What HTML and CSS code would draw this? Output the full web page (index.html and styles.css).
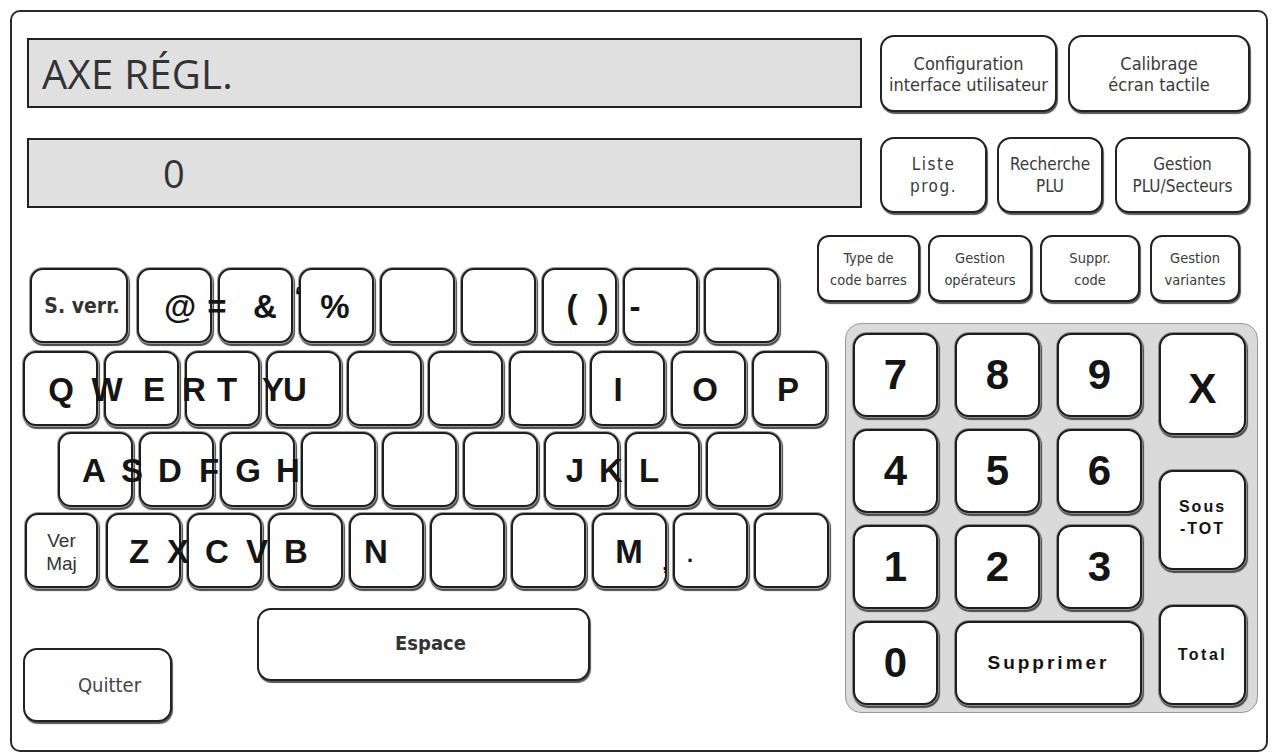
FILE: index.html
```html
<!DOCTYPE html>
<html lang="fr">
<head>
<meta charset="utf-8">
<title>Clavier</title>
<link rel="stylesheet" href="styles.css">
</head>
<body>
<div class="frame">
  <div class="top">
    <div class="displays">
      <div class="display display-text">AXE RÉGL.</div>
      <div class="display display-num">0</div>
    </div>
    <div class="menu">
      <div class="menu-row row-a">
        <div class="btn b-config">Configuration<br>interface utilisateur</div>
        <div class="btn b-calib">Calibrage<br>écran tactile</div>
      </div>
      <div class="menu-row row-b">
        <div class="btn b-liste">Liste<br>prog.</div>
        <div class="btn b-rech">Recherche<br>PLU</div>
        <div class="btn b-gest">Gestion<br>PLU/Secteurs</div>
      </div>
    </div>
  </div>

  <div class="bottom">
    <div class="kbd">
      <div class="krow r1">
        <div class="key key-sverr">S. verr.</div>
        <div class="key"></div><div class="key"></div><div class="key"></div><div class="key"></div>
        <div class="key"></div><div class="key"></div><div class="key"></div><div class="key"></div>
        <div class="labels">
          <span class="lbl" style="--x:157">@</span>
          <span class="lbl" style="--x:194">=</span>
          <span class="lbl" style="--x:242">&amp;</span>
          <span class="lbl lbl-quote" style="--x:275">‘</span>
          <span class="lbl" style="--x:312">%</span>
          <span class="lbl" style="--x:549">(</span>
          <span class="lbl" style="--x:580">)</span>
          <span class="lbl" style="--x:612">-</span>
        </div>
      </div>
      <div class="krow r2">
        <div class="key"></div><div class="key"></div><div class="key"></div><div class="key"></div><div class="key"></div>
        <div class="key"></div><div class="key"></div><div class="key"></div><div class="key"></div><div class="key"></div>
        <div class="labels">
          <span class="lbl" style="--x:38">Q</span>
          <span class="lbl" style="--x:84">W</span>
          <span class="lbl" style="--x:131">E</span>
          <span class="lbl" style="--x:171">R</span>
          <span class="lbl" style="--x:204">T</span>
          <span class="lbl" style="--x:250">Y</span>
          <span class="lbl" style="--x:272">U</span>
          <span class="lbl" style="--x:595">I</span>
          <span class="lbl" style="--x:682">O</span>
          <span class="lbl" style="--x:765">P</span>
        </div>
      </div>
      <div class="krow r3">
        <div class="key"></div><div class="key"></div><div class="key"></div><div class="key"></div><div class="key"></div>
        <div class="key"></div><div class="key"></div><div class="key"></div><div class="key"></div>
        <div class="labels">
          <span class="lbl" style="--x:71">A</span>
          <span class="lbl" style="--x:109">S</span>
          <span class="lbl" style="--x:147">D</span>
          <span class="lbl" style="--x:186">F</span>
          <span class="lbl" style="--x:225">G</span>
          <span class="lbl" style="--x:265">H</span>
          <span class="lbl" style="--x:552">J</span>
          <span class="lbl" style="--x:588">K</span>
          <span class="lbl" style="--x:626">L</span>
        </div>
      </div>
      <div class="krow r4">
        <div class="key key-maj">Ver<br>Maj</div>
        <div class="key"></div><div class="key"></div><div class="key"></div><div class="key"></div>
        <div class="key"></div><div class="key"></div><div class="key"></div><div class="key"></div><div class="key"></div>
        <div class="labels">
          <span class="lbl" style="--x:116">Z</span>
          <span class="lbl" style="--x:155">X</span>
          <span class="lbl" style="--x:194">C</span>
          <span class="lbl" style="--x:234">V</span>
          <span class="lbl" style="--x:273">B</span>
          <span class="lbl" style="--x:353">N</span>
          <span class="lbl" style="--x:606">M</span>
          <span class="lbl lbl-comma" style="--x:642">,</span>
          <span class="lbl lbl-dot" style="--x:667">.</span>
        </div>
      </div>
      <div class="kbd-foot">
        <div class="btn b-quit">Quitter</div>
        <div class="btn b-space">Espace</div>
      </div>
    </div>

    <div class="side">
      <div class="small-row">
        <div class="btn sbtn s1">Type de<br>code barres</div>
        <div class="btn sbtn s2">Gestion<br>opérateurs</div>
        <div class="btn sbtn s3">Suppr.<br>code</div>
        <div class="btn sbtn s4">Gestion<br>variantes</div>
      </div>
      <div class="numpad">
        <div class="numgrid">
          <div class="nkey">7</div><div class="nkey">8</div><div class="nkey">9</div>
          <div class="nkey">4</div><div class="nkey">5</div><div class="nkey">6</div>
          <div class="nkey">1</div><div class="nkey">2</div><div class="nkey">3</div>
          <div class="nkey">0</div><div class="nkey nkey-del">Supprimer</div>
        </div>
        <div class="numside">
          <div class="nkey nkey-x">X</div>
          <div class="nkey nkey-sub">Sous<br>-TOT</div>
          <div class="nkey nkey-tot">Total</div>
        </div>
      </div>
    </div>
  </div>
</div>
</body>
</html>
```

FILE: styles.css
```css
* { box-sizing: border-box; }

html, body {
  margin: 0;
  padding: 0;
  background: #ffffff;
}

body {
  width: 1273px;
  height: 754px;
  overflow: hidden;
  font-family: "Liberation Sans", Arial, sans-serif;
  color: #222;
}

.frame {
  margin: 10px 0 0 10px;
  width: 1258px;
  height: 742px;
  border: 2px solid #2a2a2a;
  border-radius: 10px;
}

/* ---------- top section ---------- */
.top {
  display: flex;
  margin: 23px 0 0 15px;
}

.displays {
  width: 835px;
  padding-top: 3px;
  display: flex;
  flex-direction: column;
  gap: 30px;
}

.display {
  height: 70px;
  border: 2px solid #222;
  background: #e0e0e0;
  display: flex;
  align-items: center;
  font-family: "Open Sans", "Noto Sans", sans-serif;
  font-size: 40px;
  color: #333;
}

.display-text { padding-left: 13px; letter-spacing: 0.3px; }
.display-num { padding-left: 134px; font-size: 38px; }

.menu {
  margin-left: 18px;
  width: 370px;
  display: flex;
  flex-direction: column;
  gap: 25px;
}

.menu-row { display: flex; }
.row-a { height: 77px; gap: 11px; }
.row-b { height: 76px; }

.btn {
  background: #fff;
  border: 2px solid #222;
  border-radius: 14px;
  box-shadow: 1px 2px 1px #555;
  display: flex;
  align-items: center;
  justify-content: center;
  text-align: center;
  font-family: "DejaVu Sans Condensed", "DejaVu Sans", sans-serif;
  font-stretch: condensed;
  font-size: 17px;
  line-height: 21px;
  color: #3a3a3a;
}

.b-config { width: 177px; font-size: 18px; }
.b-calib { width: 182px; font-size: 18px; }
.b-liste { width: 107px; letter-spacing: 1.5px; line-height: 22px; }
.b-rech { width: 106px; margin-left: 10px; line-height: 22px; }
.b-gest { width: 135px; margin-left: 12px; line-height: 22px; }

/* ---------- bottom section ---------- */
.bottom {
  display: flex;
  margin: 22px 0 0 11px;
}

.kbd {
  width: 804px;
  padding-top: 33px;
  flex: none;
}

.krow {
  position: relative;
  display: flex;
  height: 75px;
  gap: 6px;
}

.r1 { padding-left: 7px; }
.r2 { margin-top: 8px; }
.r3 { margin-top: 6px; padding-left: 35px; }
.r4 { margin-top: 6px; padding-left: 2px; }

.key {
  width: 75px;
  height: 75px;
  flex: none;
  background: #fff;
  border: 2px solid #1e1e1e;
  border-radius: 13px;
  box-shadow: 0 0 0 1px #9a9a9a, 1px 2px 1px 1px #4a4a4a;
  display: flex;
  align-items: center;
  justify-content: center;
  text-align: center;
}

.key-sverr {
  width: 98px;
  margin-right: 3px;
  font-family: "DejaVu Sans Condensed", "DejaVu Sans", sans-serif;
  font-stretch: condensed;
  font-weight: 700;
  font-size: 21px;
  color: #333;
  padding-left: 6px;
}

.key-maj {
  width: 73px;
  margin-right: 2px;
  font-size: 19px;
  line-height: 23px;
  color: #333;
  padding-top: 2px;
}

.labels {
  position: absolute;
  inset: 0;
  pointer-events: none;
}

.lbl {
  position: absolute;
  top: 50%;
  left: calc(var(--x) * 1px);
  transform: translate(-50%, -50%);
  font-family: "Liberation Sans", Arial, sans-serif;
  font-weight: 700;
  font-size: 33px;
  line-height: 1;
  color: #151515;
}

.lbl-quote { font-size: 26px; margin-top: -10px; }
.lbl-comma { font-size: 20px; margin-top: 12px; }
.lbl-dot { font-size: 22px; margin-top: 4px; }

.kbd-foot {
  display: flex;
  align-items: flex-start;
  margin-top: 20px;
}

.b-quit {
  width: 149px;
  height: 74px;
  margin-top: 40px;
  font-size: 20px;
  color: #444;
  padding-left: 24px;
}

.b-space {
  width: 333px;
  height: 73px;
  margin-left: 85px;
  font-weight: 700;
  font-size: 20px;
  color: #333;
  padding: 0 0 2px 14px;
}

/* ---------- right side ---------- */
.side {
  margin-left: -10px;
  width: 441px;
  flex: none;
}

.small-row {
  display: flex;
  height: 67px;
}

.sbtn {
  font-size: 14.5px;
  line-height: 22px;
  border-radius: 12px;
}

.s1 { width: 103px; }
.s2 { width: 104px; margin-left: 8px; }
.s3 { width: 100px; margin-left: 8px; }
.s4 { width: 90px; margin-left: 10px; }

.numpad {
  margin: 21px 0 0 28px;
  width: 413px;
  height: 390px;
  border: 1.5px solid #9a9a9a;
  border-radius: 16px;
  background: #dadada;
  padding: 9px 0 0 7px;
  display: flex;
}

.numgrid {
  display: grid;
  grid-template-columns: repeat(3, 85px);
  grid-auto-rows: 84px;
  column-gap: 17px;
  row-gap: 12px;
}

.nkey {
  background: #fff;
  border: 2px solid #1e1e1e;
  border-radius: 14px;
  box-shadow: 0 0 0 1px #8a8a8a, 1px 2px 1px 1px #4a4a4a;
  display: flex;
  align-items: center;
  justify-content: center;
  text-align: center;
  font-family: "Liberation Sans", Arial, sans-serif;
  font-weight: 700;
  font-size: 42px;
  color: #141414;
}

.nkey-del {
  grid-column: span 2;
  font-size: 19px;
  letter-spacing: 3px;
}

.numside {
  margin-left: 17px;
  width: 87px;
  height: 372px;
  display: flex;
  flex-direction: column;
  justify-content: space-between;
}

.nkey-x { height: 102px; padding-top: 10px; }

.nkey-sub {
  height: 100px;
  font-size: 16px;
  line-height: 22px;
  letter-spacing: 2px;
  padding-bottom: 4px;
}

.nkey-tot {
  height: 100px;
  font-size: 16px;
  letter-spacing: 2.5px;
}
```
